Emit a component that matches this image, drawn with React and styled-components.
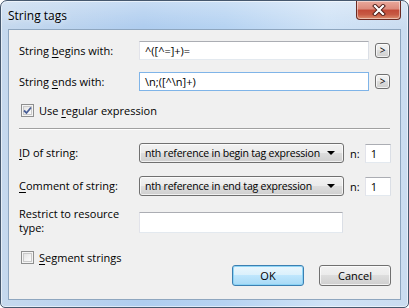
import React from 'react';
import styled, { createGlobalStyle } from 'styled-components';

const GlobalStyle = createGlobalStyle`
  html, body {
    margin: 0;
    padding: 0;
    background: #ffffff;
  }
  body {
    font-family: "Open Sans", "Noto Sans", sans-serif;
    font-size: 11px;
    color: #000;
  }
`;

// Window chrome
const Window = styled.div`
  box-sizing: border-box;
  width: 409px;
  height: 308px;
  display: flex;
  flex-direction: column;
  border: 1px solid #46586e;
  border-radius: 7px 7px 5px 5px;
  background:
    linear-gradient(180deg, rgba(255, 255, 255, 0.3) 0px, rgba(255, 255, 255, 0) 26px),
    linear-gradient(90deg, #c6d9ee 0%, #afcdef 35%, #b6d3f2 55%, #cfe2f6 80%, #cadcf0 100%);
  box-shadow: inset 0 0 0 1px rgba(255, 255, 255, 0.55);
  overflow: hidden;
`;

const TitleBar = styled.div`
  height: 28px;
  display: flex;
  align-items: flex-start;
  padding: 0 7px 0 7px;
`;

const Title = styled.div`
  margin-top: 6px;
  font-size: 12px;
  color: #000;
  text-shadow: 0 0 6px rgba(255, 255, 255, 0.9);
`;

const CloseButton = styled.div`
  margin-left: auto;
  width: 45px;
  height: 19px;
  box-sizing: border-box;
  border: 1px solid #6b2a22;
  border-top: none;
  border-radius: 0 0 4px 4px;
  background: linear-gradient(180deg, #e9a99c 0%, #dc8a7b 45%, #c24a37 50%, #c75a44 75%, #dd8f6f 100%);
  box-shadow: inset 0 0 0 1px rgba(255, 255, 255, 0.45);
  display: flex;
  align-items: center;
  justify-content: center;
`;

const Client = styled.div`
  flex: 1;
  margin: 0 7px 7px 7px;
  border: 1px solid #8ea6bf;
  background: #f0f0f0;
  padding: 10px 9px 0 10px;
  display: flex;
  flex-direction: column;
`;

// Form layout
const FieldRow = styled.div`
  display: flex;
  align-items: ${(p) => p.$align || 'center'};
  margin-top: ${(p) => p.$top || 0}px;
  min-height: ${(p) => p.$h || 19}px;
`;

const Label = styled.div`
  width: 120px;
  flex-shrink: 0;
  line-height: 14px;
`;

const TextBox = styled.div`
  box-sizing: border-box;
  width: ${(p) => p.$w}px;
  height: ${(p) => p.$h || 19}px;
  margin-top: ${(p) => p.$mt || 0}px;
  background: #fff;
  border: 1px solid ${(p) => (p.$focus ? '#7fb4e8' : '#abadb3')};
  border-left-color: ${(p) => (p.$focus ? '#7fb4e8' : '#e2e3ea')};
  border-right-color: ${(p) => (p.$focus ? '#7fb4e8' : '#dbdfe6')};
  border-bottom-color: ${(p) => (p.$focus ? '#7fb4e8' : '#e3e9ef')};
  padding: 0 0 0 5px;
  line-height: 17px;
  white-space: nowrap;
  overflow: hidden;
`;

const SmallButton = styled.div`
  box-sizing: border-box;
  width: 15px;
  height: 15px;
  margin-left: 6px;
  border: 1px solid #707070;
  border-radius: 3px;
  background: linear-gradient(180deg, #f2f2f2 0%, #ebebeb 50%, #dddddd 50%, #cfcfcf 100%);
  box-shadow: inset 0 0 0 1px rgba(255, 255, 255, 0.7);
  font-size: 10px;
  line-height: 12px;
  text-align: center;
`;

const CheckRow = styled.label`
  display: flex;
  align-items: center;
  gap: 5px;
  margin-top: ${(p) => p.$top || 0}px;
  margin-left: 2px;
  height: 15px;
`;

const Box = styled.span`
  box-sizing: border-box;
  width: 13px;
  height: 13px;
  border: 1px solid #8e8f8f;
  background: linear-gradient(135deg, #dcdcdc 0%, #f4f4f4 60%, #ffffff 100%);
  box-shadow: inset 0 0 0 1px #f4f4f4, inset 0 0 0 2px #c9c9c9;
  display: flex;
  align-items: center;
  justify-content: center;
`;

const Separator = styled.div`
  margin-top: ${(p) => p.$top}px;
  height: 1px;
  background: #a0a0a0;
  border-bottom: 1px solid #ffffff;
  margin-right: 1px;
`;

const Select = styled.div`
  box-sizing: border-box;
  width: 205px;
  height: 20px;
  border: 1px solid #707070;
  border-radius: 3px;
  background: linear-gradient(180deg, #f2f2f2 0%, #ebebeb 50%, #dddddd 50%, #cfcfcf 100%);
  box-shadow: inset 0 0 0 1px rgba(255, 255, 255, 0.7);
  display: flex;
  align-items: center;
  padding: 0 8px 0 5px;
  white-space: nowrap;
`;

const SelectText = styled.span`
  flex: 1;
  overflow: hidden;
  font-size: 10.5px;
  letter-spacing: -0.2px;
`;

const Arrow = styled.span`
  width: 0;
  height: 0;
  border-left: 4px solid transparent;
  border-right: 4px solid transparent;
  border-top: 4px solid #000;
  margin-left: 4px;
`;

const NLabel = styled.span`
  margin: 0 5px 0 6px;
`;

const Underline = styled.span`
  text-decoration: underline;
  text-underline-offset: 2px;
`;

const Footer = styled.div`
  display: flex;
  align-items: flex-start;
  margin-top: 15px;
`;

const Buttons = styled.div`
  margin-left: auto;
  margin-top: 15px;
  display: flex;
  gap: 15px;
`;

const DialogButton = styled.div`
  box-sizing: border-box;
  width: 72px;
  height: 21px;
  border: 1px solid ${(p) => (p.$default ? '#3c7fb1' : '#707070')};
  border-radius: 3px;
  background: ${(p) =>
    p.$default
      ? 'linear-gradient(180deg, #eaf6fd 0%, #d9f0fc 50%, #bee6fd 50%, #a7d9f5 100%)'
      : 'linear-gradient(180deg, #f2f2f2 0%, #ebebeb 50%, #dddddd 50%, #cfcfcf 100%)'};
  box-shadow: inset 0 0 0 1px ${(p) => (p.$default ? 'rgba(134, 210, 245, 0.9)' : 'rgba(255, 255, 255, 0.7)')};
  text-align: center;
  line-height: 19px;
`;

const CloseGlyph = () => (
  <svg width="14" height="12" viewBox="0 0 14 12">
    <path d="M3 2 L11 10 M11 2 L3 10" stroke="#4b1a14" strokeWidth="4" strokeLinecap="square" />
    <path d="M3 2 L11 10 M11 2 L3 10" stroke="#ffffff" strokeWidth="2.2" strokeLinecap="square" />
  </svg>
);

const Check = ({ checked }) => (
  <Box>
    {checked && (
      <svg width="9" height="9" viewBox="0 0 9 9">
        <path d="M1 4.5 L3.5 7 L8 1.5" fill="none" stroke="#4a5f97" strokeWidth="1.8" />
      </svg>
    )}
  </Box>
);

const App = () => (
  <>
    <GlobalStyle />
    <Window>
      <TitleBar>
        <Title>String tags</Title>
        <CloseButton>
          <CloseGlyph />
        </CloseButton>
      </TitleBar>
      <Client>
        <FieldRow $top={1}>
          <Label>
            String <Underline>b</Underline>egins with:
          </Label>
          <TextBox $w={230}>^([^=]+)=</TextBox>
          <SmallButton>&gt;</SmallButton>
        </FieldRow>
        <FieldRow $top={12}>
          <Label>
            String <Underline>e</Underline>nds with:
          </Label>
          <TextBox $w={230} $focus>
            \n;([^\n]+)
          </TextBox>
          <SmallButton>&gt;</SmallButton>
        </FieldRow>
        <CheckRow $top={12}>
          <Check checked />
          <span>
            Use <Underline>r</Underline>egular expression
          </span>
        </CheckRow>
        <Separator $top={10} />
        <FieldRow $top={13} $h={20}>
          <Label>
            <Underline>I</Underline>D of string:
          </Label>
          <Select>
            <SelectText>nth reference in begin tag expression</SelectText>
            <Arrow />
          </Select>
          <NLabel>n:</NLabel>
          <TextBox $w={26}>1</TextBox>
        </FieldRow>
        <FieldRow $top={13} $h={20}>
          <Label>
            <Underline>C</Underline>omment of string:
          </Label>
          <Select>
            <SelectText>nth reference in end tag expression</SelectText>
            <Arrow />
          </Select>
          <NLabel>n:</NLabel>
          <TextBox $w={26}>1</TextBox>
        </FieldRow>
        <FieldRow $top={11} $h={28} $align="flex-start">
          <Label>Restrict to resource type:</Label>
          <TextBox $w={204} $h={21} $mt={5} />
        </FieldRow>
        <Footer>
          <CheckRow>
            <Check />
            <span>
              <Underline>S</Underline>egment strings
            </span>
          </CheckRow>
          <Buttons>
            <DialogButton $default>OK</DialogButton>
            <DialogButton>Cancel</DialogButton>
          </Buttons>
        </Footer>
      </Client>
    </Window>
  </>
);

export default App;
